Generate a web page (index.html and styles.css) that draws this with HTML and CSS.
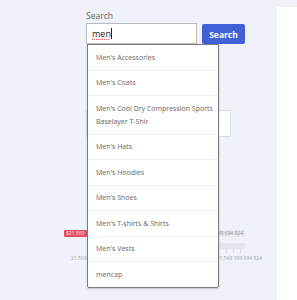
FILE: index.html
```html
<!DOCTYPE html>
<html lang="en">

<head>
    <meta charset="UTF-8">
    <meta name="viewport" content="width=device-width, initial-scale=1.0">
    <title>Search</title>
    <link rel="stylesheet" href="styles.css">
</head>

<body>
    <div class="page">
        <div class="main">
            <form class="search-form">
                <label class="search-label">Search</label>
                <div class="search-row">
                    <div class="field">
                        <span class="typed">men</span><span class="caret"></span>
                        <ul class="suggest">
                            <li>Men's Accessories</li>
                            <li>Men's Coats</li>
                            <li>Men's Cool Dry Compression Sports Baselayer T-Shir</li>
                            <li>Men's Hats</li>
                            <li>Men's Hoodies</li>
                            <li>Men's Shoes</li>
                            <li>Men's T-shirts &amp; Shirts</li>
                            <li>Men's Vests</li>
                            <li>mencap</li>
                        </ul>
                    </div>
                    <button class="search-btn" type="button">Search</button>
                </div>
            </form>

            <div class="sort-box"></div>

            <div class="price">
                <div class="price-badges">
                    <span class="badge badge-min">$21.569</span>
                    <span class="badge badge-max">$21.569 999 694 824</span>
                </div>
                <div class="track"></div>
                <div class="ticks">
                    <span></span><span></span><span></span>
                </div>
                <div class="price-labels">
                    <span class="lbl-min">21.569</span>
                    <span class="lbl-max">21.569 999 694 824</span>
                </div>
            </div>
        </div>
        <div class="side"></div>
    </div>
</body>

</html>
```

FILE: styles.css
```css
* {
    box-sizing: border-box;
}

body {
    margin: 0;
    background-color: #eff2fa;
    font-family: "Open Sans", "Noto Sans", sans-serif;
    color: #555;
}

.page {
    display: flex;
    height: 300px;
    overflow: hidden;
}

.main {
    flex: 1;
    padding-top: 10px;
    padding-left: 64px;
}

.side {
    width: 20px;
    margin-top: 7px;
    background-color: #fff;
}

.search-form {
    margin: 0 0 0 22px;
}

.search-label {
    display: block;
    font-size: 8.5px;
    line-height: 12px;
    color: #666;
    margin-bottom: 1px;
}

.search-row {
    display: flex;
    align-items: flex-start;
    gap: 5px;
}

.field {
    position: relative;
    width: 111px;
    height: 21px;
    background-color: #fff;
    border: 1px solid #bcbcbc;
    padding-left: 5px;
    display: flex;
    align-items: center;
    font-size: 9px;
    color: #222;
}

.typed {
    text-decoration: underline dotted #e35b5b;
    text-decoration-thickness: 1px;
    text-underline-offset: 2px;
}

.caret {
    width: 1px;
    height: 11px;
    background-color: #222;
}

.search-btn {
    margin-top: 1px;
    width: 43px;
    height: 20px;
    border: 0;
    border-radius: 2px;
    background-color: #4260d6;
    color: #fff;
    font-family: "Open Sans", sans-serif;
    font-weight: 700;
    font-size: 8.5px;
    padding: 0;
}

.suggest {
    position: absolute;
    top: 20px;
    left: 0;
    width: 132px;
    margin: 0;
    padding: 0;
    list-style: none;
    background-color: #fff;
    border: 1px solid #7c7c7c;
    border-radius: 0 0 2px 2px;
    box-shadow: 0 1px 2px rgba(0, 0, 0, 0.2);
    z-index: 5;
}

.suggest li {
    padding: 5.75px 2px 5.75px 8px;
    font-size: 7px;
    line-height: 13px;
    color: #666;
    border-top: 1px solid #f0f0f0;
}

.suggest li:first-child {
    border-top: 0;
}

.sort-box {
    margin: 66px 0 0 22px;
    width: 145px;
    height: 27px;
    background-color: #fff;
    border: 1px solid #d9dde6;
}

.price {
    margin-top: 93px;
    width: 181px;
}

.price-badges {
    display: flex;
    justify-content: space-between;
    height: 7px;
}

.badge {
    font-size: 5px;
    line-height: 7px;
    padding: 0 2px;
    border-radius: 1px;
}

.badge-min {
    width: 23px;
    background-color: #e2535e;
    color: #fde;
}

.badge-max {
    background-color: #e3e6ec;
    color: #999;
}

.track {
    margin: 6px 0 0 30px;
    height: 6px;
    border-radius: 2px;
    background-color: #e2e5eb;
}

.ticks {
    display: flex;
    gap: 6px;
    margin-left: 162px;
    height: 4px;
}

.ticks span {
    width: 1px;
    background-color: #d8dbe2;
}

.price-labels {
    display: flex;
    justify-content: space-between;
    margin-top: 2px;
    font-size: 5px;
    line-height: 6px;
    color: #a5a8ae;
}

.lbl-min {
    margin-left: 7px;
}

.lbl-max {
    margin-right: -17px;
}
```
